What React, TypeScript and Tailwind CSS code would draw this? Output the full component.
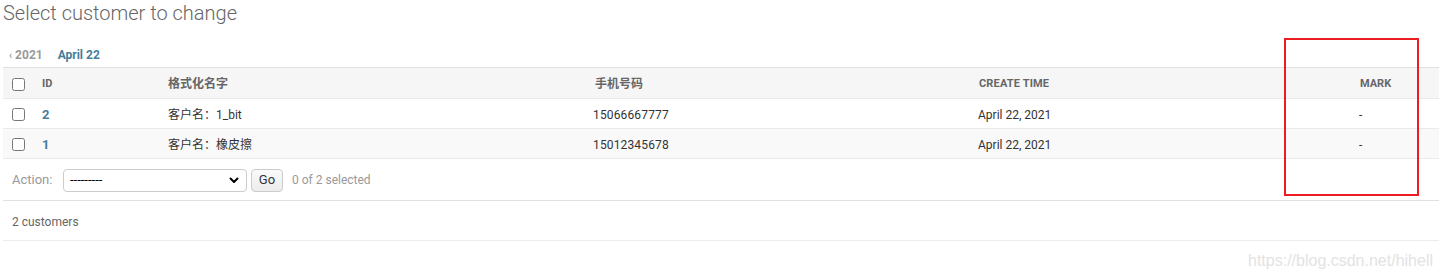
import React from "react";

const rows = [
  { id: "2", name: "客户名：1_bit", phone: "15066667777", time: "April 22, 2021", mark: "-" },
  { id: "1", name: "客户名：橡皮擦", phone: "15012345678", time: "April 22, 2021", mark: "-" },
];

const cols = "grid grid-cols-[31px_126px_425px_385px_381px_1fr]";

export default function App() {
  return (
    <div
      className="relative w-[1439px] h-[278px] overflow-hidden bg-white text-[#333]"
      style={{ fontFamily: "Roboto, 'Noto Sans CJK SC', sans-serif" }}
    >
      <h1 className="h-[26px] pl-[3px] text-[20px] leading-[26px] font-light text-[#666]">
        Select customer to change
      </h1>

      <div className="mt-[19px] h-[20px] flex items-center pl-[9px] text-[12px] font-bold leading-[20px]">
        <span className="text-[#999]">
          <span className="text-[10px]">‹</span> 2021
        </span>
        <span className="ml-[15px] text-[#447e9b]">April 22</span>
      </div>

      <div className="mt-[2px] pl-[3px]">
        {/* header */}
        <div className={`${cols} h-[32px] pt-[2px] border-t border-b border-t-[#e0e0e0] border-b-[#eaeaea] bg-[#f6f6f6] text-[11px] font-bold text-[#666] items-center`}>
          <div className="pl-[9px] flex items-center">
            <input type="checkbox" className="m-0 w-[13px] h-[13px]" />
          </div>
          <div className="px-2">ID</div>
          <div className="px-2 text-[12px]">格式化名字</div>
          <div className="px-2 text-[12px] pl-[10px]">手机号码</div>
          <div className="px-2 pl-[9px] tracking-[0.15px]">CREATE TIME</div>
          <div className="px-2 pl-[9px]">MARK</div>
        </div>
        {rows.map((r, i) => (
          <div
            key={r.id}
            className={`${cols} h-[30px] pt-[2px] border-b border-[#eaeaea] items-center text-[12px] ${i === 1 ? "bg-[#f9f9f9]" : "bg-white"}`}
          >
            <div className="pl-[9px] flex items-center">
              <input type="checkbox" className="m-0 w-[13px] h-[13px]" />
            </div>
            <div className="px-2 font-bold text-[13px] text-[#447e9b]">{r.id}</div>
            <div className="px-2">{r.name}</div>
            <div className="px-2 tracking-[0.15px]">{r.phone}</div>
            <div className="px-2">{r.time}</div>
            <div className="px-2">{r.mark}</div>
          </div>
        ))}

        {/* actions */}
        <div className="h-[42px] pt-[1px] border-b border-[#e0e0e0] flex items-center pl-[9px] text-[13px]">
          <span className="text-[#999] w-[51px]">Action:</span>
          <div className="w-[184px] h-[23px] border border-[#ccc] rounded-[4px] bg-white flex items-center justify-between pl-[6px] pr-[6px] text-[13px] text-black">
            <span>---------</span>
            <svg width="12" height="12" viewBox="0 0 24 24" fill="none" stroke="black" strokeWidth="4" strokeLinecap="round" strokeLinejoin="round">
              <path d="M5 9l7 7 7-7" />
            </svg>
          </div>
          <div className="ml-[4px] w-[32px] h-[23px] border border-[#ccc] rounded-[4px] bg-gradient-to-b from-[#fafafa] to-[#ececec] flex items-center justify-center text-[13px] text-[#333]">
            Go
          </div>
          <span className="ml-[9px] text-[#999] text-[12px]">0 of 2 selected</span>
        </div>

        {/* footer */}
        <div className="h-[40px] pt-[2px] border-b border-[#ececec] flex items-center pl-[9px] text-[12px] text-[#666]">
          2 customers
        </div>
      </div>

      {/* annotation */}
      <div className="absolute left-[1284px] top-[38px] w-[135px] h-[158px] border-2 border-[#ec1c24]" />

      {/* watermark */}
      <div
        className="absolute left-[1248px] top-[251px] text-[16px] leading-[20px] text-[#e3e3e3]"
        style={{ fontFamily: "'Liberation Sans', Arial, sans-serif" }}
      >
        https://blog.csdn.net/hihell
      </div>
    </div>
  );
}
